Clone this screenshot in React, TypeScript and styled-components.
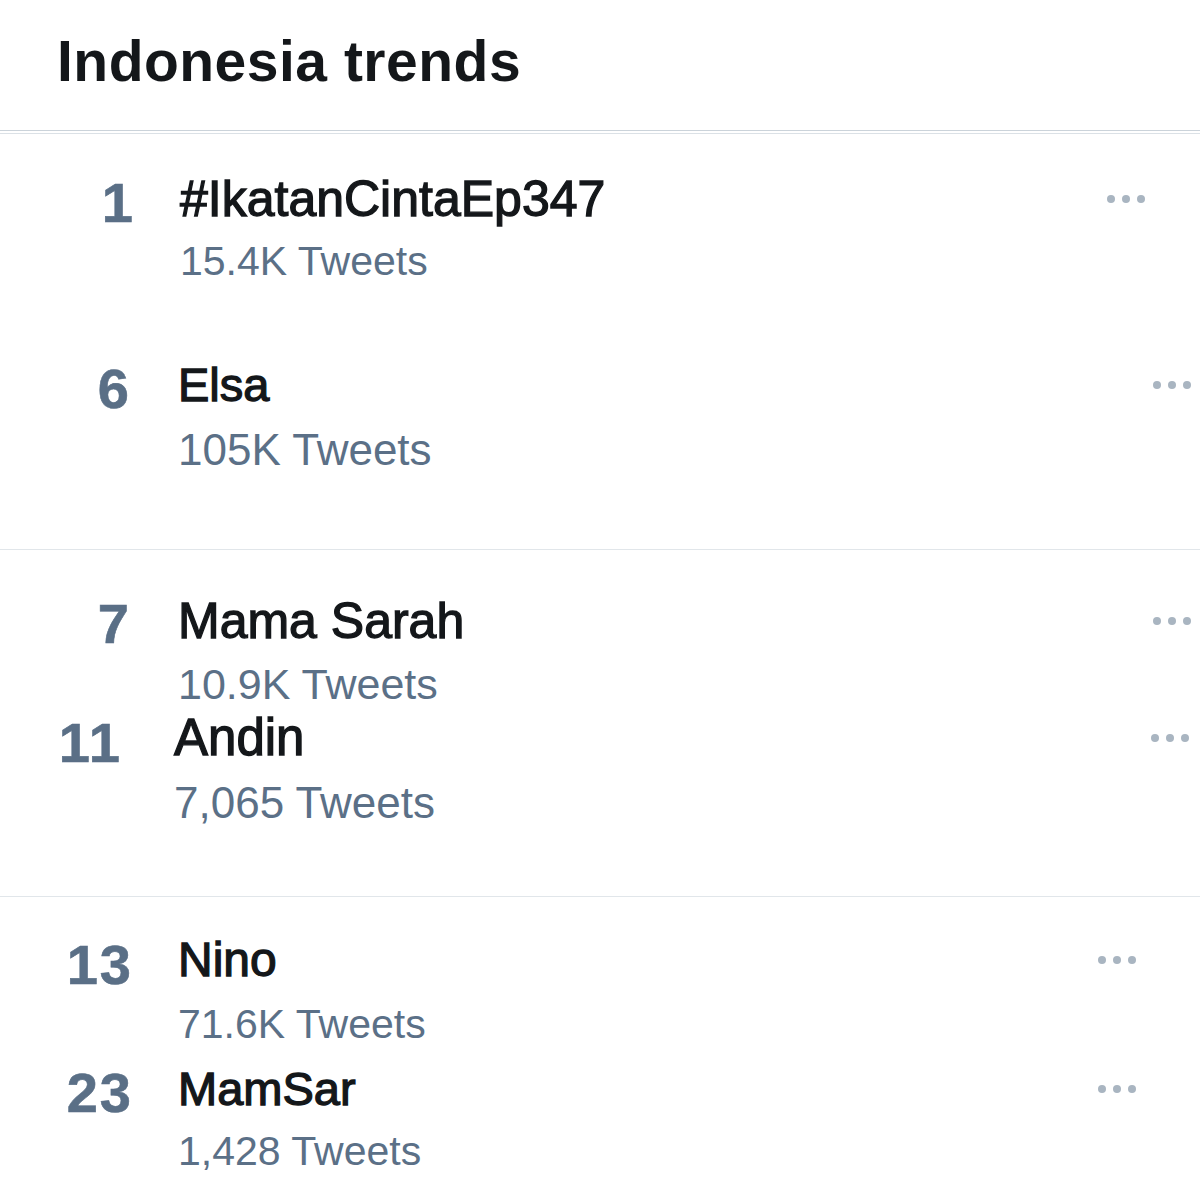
import React from "react";
import styled, { createGlobalStyle } from "styled-components";

const GlobalStyle = createGlobalStyle`
  html, body {
    margin: 0;
    padding: 0;
    background: #ffffff;
  }
  body {
    font-family: "Liberation Sans", Arial, sans-serif;
  }
`;

const Page = styled.div`
  width: 1200px;
  background: #ffffff;
  overflow: hidden;
`;

const Header = styled.header`
  padding: 33px 0 40px 57px;
  border-bottom: 1px solid #cbd3da;
  margin-bottom: 2px;
`;

const Title = styled.h1`
  margin: 0;
  font-family: "Liberation Sans", Arial, sans-serif;
  font-weight: 700;
  font-size: 57px;
  line-height: 1;
  color: #14171a;
  letter-spacing: 0.5px;
`;

const Section = styled.section<{ $bottom: number; $line: string }>`
  border-top: 1px solid ${(p) => p.$line};
  padding-bottom: ${(p) => p.$bottom}px;
`;

const Row = styled.div<{ $top: number }>`
  display: flex;
  align-items: flex-start;
  margin-top: ${(p) => p.$top}px;
`;

const Rank = styled.div<{ $end: number; $drop: number }>`
  flex: none;
  width: ${(p) => p.$end}px;
  padding-top: ${(p) => p.$drop}px;
  text-align: right;
  font-family: "Liberation Sans", Arial, sans-serif;
  font-weight: 700;
  font-size: 56px;
  line-height: 1;
  letter-spacing: 2px;
  color: #5a6f86;
  -webkit-text-stroke: 0.6px #5a6f86;
`;

const Body = styled.div<{ $indent: number }>`
  flex: 1;
  min-width: 0;
  margin-left: ${(p) => p.$indent}px;
  display: flex;
  flex-direction: column;
`;

const NameLine = styled.div`
  display: flex;
  align-items: center;
  justify-content: space-between;
`;

const Name = styled.div<{ $size: number }>`
  font-family: "Liberation Sans", Arial, sans-serif;
  font-weight: 400;
  font-size: ${(p) => p.$size}px;
  line-height: 1;
  color: #14171a;
  -webkit-text-stroke: 1.3px #14171a;
  white-space: nowrap;
`;

const Count = styled.div<{ $gap: number; $size: number }>`
  margin-top: ${(p) => p.$gap}px;
  font-family: "Liberation Sans", Arial, sans-serif;
  font-weight: 400;
  font-size: ${(p) => p.$size}px;
  line-height: 1;
  color: #5b7087;
  white-space: nowrap;
`;

const More = styled.div<{ $right: number }>`
  display: flex;
  gap: 7px;
  margin-right: ${(p) => p.$right}px;
  flex: none;
`;

const Dot = styled.span`
  width: 8px;
  height: 8px;
  border-radius: 50%;
  background: #a9b5c1;
`;

type Trend = {
  rank: string;
  name: string;
  count: string;
  top: number;
  rankEnd: number;
  textStart: number;
  drop: number;
  size: number;
  countSize: number;
  gap: number;
  dotsRight: number;
};

type Group = { bottom: number; line: string; trends: Trend[] };

const groups: Group[] = [
  {
    bottom: 77,
    line: "#dbe1e6",
    trends: [
      { rank: "1", name: "#IkatanCintaEp347", count: "15.4K Tweets", top: 40, rankEnd: 135, textStart: 180, drop: 1, size: 50, countSize: 41, gap: 17, dotsRight: 55 },
      { rank: "6", name: "Elsa", count: "105K Tweets", top: 79, rankEnd: 131, textStart: 178, drop: 0, size: 47, countSize: 44, gap: 20, dotsRight: 9 },
    ],
  },
  {
    bottom: 71,
    line: "#e1e6ea",
    trends: [
      { rank: "7", name: "Mama Sarah", count: "10.9K Tweets", top: 46, rankEnd: 131, textStart: 178, drop: 0, size: 50, countSize: 43, gap: 17, dotsRight: 9 },
      { rank: "11", name: "Andin", count: "7,065 Tweets", top: 6, rankEnd: 122, textStart: 174, drop: 3, size: 51, countSize: 44, gap: 18, dotsRight: 11 },
    ],
  },
  {
    bottom: 30,
    line: "#e1e6ea",
    trends: [
      { rank: "13", name: "Nino", count: "71.6K Tweets", top: 39, rankEnd: 133, textStart: 178, drop: 1, size: 48, countSize: 41, gap: 20, dotsRight: 64 },
      { rank: "23", name: "MamSar", count: "1,428 Tweets", top: 20, rankEnd: 133, textStart: 178, drop: 0, size: 47, countSize: 41, gap: 19, dotsRight: 64 },
    ],
  },
];

function MoreButton({ right }: { right: number }) {
  return (
    <More $right={right} aria-label="More">
      <Dot />
      <Dot />
      <Dot />
    </More>
  );
}

export default function App() {
  return (
    <>
      <GlobalStyle />
      <Page>
        <Header>
          <Title>Indonesia trends</Title>
        </Header>
        {groups.map((g, gi) => (
          <Section key={gi} $bottom={g.bottom} $line={g.line}>
            {g.trends.map((t) => (
              <Row key={t.rank} $top={t.top}>
                <Rank $end={t.rankEnd} $drop={t.drop}>
                  {t.rank}
                </Rank>
                <Body $indent={t.textStart - t.rankEnd}>
                  <NameLine>
                    <Name $size={t.size}>{t.name}</Name>
                    <MoreButton right={t.dotsRight} />
                  </NameLine>
                  <Count $gap={t.gap} $size={t.countSize}>
                    {t.count}
                  </Count>
                </Body>
              </Row>
            ))}
          </Section>
        ))}
      </Page>
    </>
  );
}
